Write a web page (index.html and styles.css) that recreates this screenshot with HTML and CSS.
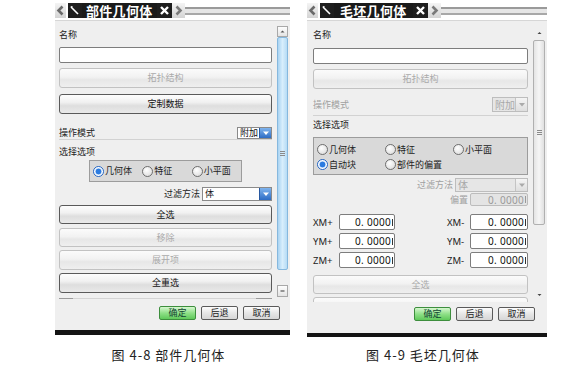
FILE: index.html
```html
<!DOCTYPE html>
<html lang="zh-CN">
<head>
<meta charset="utf-8">
<title>几何体</title>
<link rel="stylesheet" href="styles.css">
</head>
<body>
<div class="page">
  <div class="col">
    <div class="panel panel-left">
      <div class="titlebar">
        <div class="tab-arrow"><svg width="9" height="11" viewBox="0 0 9 11"><polyline points="6.5,1.5 2.5,5.5 6.5,9.5" fill="none" stroke="#6a6a6a" stroke-width="2.6"/></svg></div>
        <div class="tab-pin"><svg width="14" height="15" viewBox="0 0 14 15"><path d="M3 4 L10 11" stroke="#fff" stroke-width="1.6"/><path d="M2.5 3 L5 3.5 L3.5 5 Z" fill="#fff"/></svg></div>
        <div class="tab-title">部件几何体</div>
        <div class="tab-close"><svg width="15" height="15" viewBox="0 0 15 15"><path d="M4 4 L11 11 M11 4 L4 11" stroke="#fff" stroke-width="2.4"/></svg></div>
        <div class="tab-arrow tab-arrow-r"><svg width="9" height="11" viewBox="0 0 9 11"><polyline points="2.5,1.5 6.5,5.5 2.5,9.5" fill="none" stroke="#7a7a7a" stroke-width="2.6"/></svg></div>
        <div class="tab-bar"></div>
      </div>
      <div class="body body-left">
        <div class="content content-left">
          <div class="lbl l-name">名称</div>
          <div class="field l-input"></div>
          <div class="btn dis l-topo">拓扑结构</div>
          <div class="btn l-custom">定制数据</div>
          <div class="row l-mode">
            <span class="lbl">操作模式</span>
            <div class="dd dd-mode"><span class="dd-text">附加</span><span class="dd-btn"><svg width="10" height="10" viewBox="0 0 10 10"><path d="M2 3.5 L5 7 L8 3.5 Z" fill="#fff"/></svg></span></div>
          </div>
          <div class="sep"></div>
          <div class="lbl l-sel">选择选项</div>
          <div class="radiobox l-radios">
            <div class="ritem"><span class="radio on"></span><span class="rtext">几何体</span></div>
            <div class="ritem"><span class="radio"></span><span class="rtext">特征</span></div>
            <div class="ritem"><span class="radio"></span><span class="rtext">小平面</span></div>
          </div>
          <div class="row-end l-filter">
            <span class="lbl">过滤方法</span>
            <div class="dd dd-filter"><span class="dd-text">体</span><span class="dd-btn"><svg width="10" height="12" viewBox="0 0 10 12"><path d="M2 4.5 L5 8 L8 4.5 Z" fill="#fff"/></svg></span></div>
          </div>
          <div class="btn b19 l-all">全选</div>
          <div class="btn dis b19 l-rm">移除</div>
          <div class="btn dis l-exp">展开项</div>
          <div class="btn l-resel">全重选</div>
          <div class="sash"></div>
        </div>
        <div class="scroll scroll-left">
          <div class="sb-up-box"><svg width="9" height="9" viewBox="0 0 9 9"><path d="M2.5 5.5 L4.5 3.5 L6.5 5.5 Z" fill="#555"/></svg></div>
          <div class="thumb thumb-blue"><span class="grip"></span></div>
          <div class="sb-space"></div>
          <div class="sb-down-box"><svg width="9" height="9" viewBox="0 0 9 9"><path d="M2.5 4 L6.5 4" stroke="#555" stroke-width="1.2"/></svg></div>
        </div>
      </div>
      <div class="footer footer-left">
        <div class="fbtn ok">确定</div>
        <div class="fbtn">后退</div>
        <div class="fbtn">取消</div>
      </div>
      <div class="bar-bottom"></div>
    </div>
    <div class="caption caption-left">图 4-8 部件几何体</div>
  </div>

  <div class="col">
    <div class="panel panel-right">
      <div class="titlebar">
        <div class="tab-arrow"><svg width="9" height="11" viewBox="0 0 9 11"><polyline points="6.5,1.5 2.5,5.5 6.5,9.5" fill="none" stroke="#6a6a6a" stroke-width="2.6"/></svg></div>
        <div class="tab-pin"><svg width="14" height="15" viewBox="0 0 14 15"><path d="M3 4 L10 11" stroke="#fff" stroke-width="1.6"/><path d="M2.5 3 L5 3.5 L3.5 5 Z" fill="#fff"/></svg></div>
        <div class="tab-title tab-title-r">毛坯几何体</div>
        <div class="tab-close"><svg width="15" height="15" viewBox="0 0 15 15"><path d="M4 4 L11 11 M11 4 L4 11" stroke="#fff" stroke-width="2.4"/></svg></div>
        <div class="tab-arrow tab-arrow-r"><svg width="9" height="11" viewBox="0 0 9 11"><polyline points="2.5,1.5 6.5,5.5 2.5,9.5" fill="none" stroke="#7a7a7a" stroke-width="2.6"/></svg></div>
        <div class="tab-bar"></div>
      </div>
      <div class="body body-right">
        <div class="content content-right">
          <div class="lbl r-name">名称</div>
          <div class="field r-input"></div>
          <div class="btn dis r-topo">拓扑结构</div>
          <div class="row r-mode">
            <span class="lbl dim">操作模式</span>
            <div class="dd dd-dis dd-mode-r"><span class="dd-text">附加</span><span class="dd-btn dd-btn-dis"><svg width="10" height="13" viewBox="0 0 10 13"><path d="M2 5 L5 8.5 L8 5 Z" fill="#aaa"/></svg></span></div>
          </div>
          <div class="sep r-sep"></div>
          <div class="lbl r-sel">选择选项</div>
          <div class="radiobox r-radios">
            <div class="rrow">
              <div class="ritem ritem-r"><span class="radio"></span><span class="rtext">几何体</span></div>
              <div class="ritem ritem-r"><span class="radio"></span><span class="rtext">特征</span></div>
              <div class="ritem"><span class="radio"></span><span class="rtext">小平面</span></div>
            </div>
            <div class="rrow">
              <div class="ritem ritem-r"><span class="radio on"></span><span class="rtext">自动块</span></div>
              <div class="ritem"><span class="radio"></span><span class="rtext">部件的偏置</span></div>
            </div>
          </div>
          <div class="row-end r-filter">
            <span class="lbl dim">过滤方法</span>
            <div class="dd dd-dis dd-filter-r"><span class="dd-text">体</span><span class="dd-btn dd-btn-dis"><svg width="10" height="12" viewBox="0 0 10 12"><path d="M2 4.5 L5 8 L8 4.5 Z" fill="#aaa"/></svg></span></div>
          </div>
          <div class="row-end r-offset">
            <span class="lbl dim">偏置</span>
            <div class="num num-dis"><span class="val">0. 0000</span><span class="cut"></span></div>
          </div>
          <div class="xrow r-x1">
            <div class="xpair"><span class="xl">XM+</span><div class="num num-a"><span class="val">0. 0000</span><span class="cut"></span></div></div>
            <div class="xpair"><span class="xl">XM-</span><div class="num num-b"><span class="val">0. 0000</span><span class="cut"></span></div></div>
          </div>
          <div class="xrow r-x2">
            <div class="xpair"><span class="xl">YM+</span><div class="num num-a"><span class="val">0. 0000</span><span class="cut"></span></div></div>
            <div class="xpair"><span class="xl">YM-</span><div class="num num-b"><span class="val">0. 0000</span><span class="cut"></span></div></div>
          </div>
          <div class="xrow r-x3">
            <div class="xpair"><span class="xl">ZM+</span><div class="num num-a"><span class="val">0. 0000</span><span class="cut"></span></div></div>
            <div class="xpair"><span class="xl">ZM-</span><div class="num num-b"><span class="val">0. 0000</span><span class="cut"></span></div></div>
          </div>
          <div class="btn dis b19 r-all">全选</div>
          <div class="btn dis r-next"></div>
        </div>
        <div class="scroll scroll-right">
          <div class="sb-up"><svg width="9" height="10" viewBox="0 0 9 10"><path d="M2.5 6 L4.5 4 L6.5 6 Z" fill="#444"/></svg></div>
          <div class="thumb thumb-gray"><span class="grip"></span></div>
          <div class="sb-space"></div>
          <div class="sb-down"><svg width="9" height="10" viewBox="0 0 9 10"><path d="M2.5 4 L4.5 6 L6.5 4 Z" fill="#444"/></svg></div>
        </div>
      </div>
      <div class="footer footer-right">
        <div class="fbtn ok">确定</div>
        <div class="fbtn">后退</div>
        <div class="fbtn">取消</div>
      </div>
      <div class="bar-bottom bar-bottom-r"></div>
    </div>
    <div class="caption caption-right">图 4-9 毛坯几何体</div>
  </div>
</div>
</body>
</html>
```

FILE: styles.css
```css
body {
  margin: 0;
  background: #fff;
  font-family: "Noto Sans CJK SC", "Noto Sans", sans-serif;
  color: #222;
}
.page {
  display: flex;
  padding-left: 55px;
  gap: 17px;
}
.col {
  display: flex;
  flex-direction: column;
}
.panel {
  background: #efefef;
  display: flex;
  flex-direction: column;
}
.panel-left { width: 235px; }
.panel-right { width: 240px; }

/* title bar */
.titlebar {
  height: 21px;
  box-sizing: border-box;
  padding-top: 3px;
  background: #fff;
  border-bottom: 1px solid #d6d6d6;
  display: flex;
  align-items: flex-start;
}
.tab-arrow {
  width: 11px;
  height: 15px;
  display: flex;
  align-items: center;
  justify-content: center;
  background: linear-gradient(#f4f4f4, #d4d4d4);
}
.tab-arrow svg { display: block; }
.tab-arrow-r { width: 13px; }
.tab-pin {
  width: 14px;
  height: 15px;
  margin-left: 2px;
  background: #1e1e1e;
}
.tab-pin svg, .tab-close svg { display: block; }
.tab-title {
  height: 15px;
  padding: 0 4px;
  background: #1a1a1a;
  color: #fff;
  font-weight: bold;
  font-size: 13px;
  line-height: 15px;
  letter-spacing: 0.3px;
}
.tab-title-r { padding: 0 6px; }
.tab-close {
  width: 15px;
  height: 15px;
  background: #1e1e1e;
}
.tab-bar {
  flex: 1;
  height: 8px;
  margin-top: 4px;
  box-sizing: border-box;
  border-top: 2px solid #9a9a9a;
  border-bottom: 2px solid #a8a8a8;
  background: #e6e6e6;
}

/* body */
.body {
  display: flex;
  overflow: hidden;
}
.body-left { height: 279px; }
.body-right { height: 281px; }
.content {
  flex: 1;
  min-width: 0;
  display: flex;
  flex-direction: column;
}
.content-left { padding: 0 5px 0 4px; }
.content-right { padding: 0 5px 0 6px; }

.lbl {
  font-size: 9px;
  line-height: 12px;
  height: 12px;
  color: #222;
  white-space: nowrap;
}
.dim { color: #a0a0a0; }

.field {
  height: 16px;
  box-sizing: border-box;
  border: 1px solid #7d7d7d;
  border-radius: 2px;
  background: #fff;
  flex-shrink: 0;
}
.btn {
  height: 20px;
  flex-shrink: 0;
  box-sizing: border-box;
  border: 1px solid #5a5a5a;
  border-radius: 3px;
  background: linear-gradient(#fdfdfd, #f1f1f1 40%, #dedede 60%, #e9e9e9);
  font-size: 9px;
  line-height: 18px;
  text-align: center;
  color: #111;
}
.btn.dis {
  border-color: #c2c2c2;
  color: #aaa;
  background: linear-gradient(#fbfbfb, #f2f2f2 45%, #e7e7e7 60%, #efefef);
}
.b19 { height: 19px; line-height: 17px; }

.row {
  display: flex;
  justify-content: space-between;
  align-items: center;
  flex-shrink: 0;
}
.row-end {
  display: flex;
  justify-content: flex-end;
  align-items: center;
  gap: 2px;
  flex-shrink: 0;
}
.sep {
  height: 1px;
  background: #d2d2d2;
  flex-shrink: 0;
}

.dd {
  display: flex;
  box-sizing: border-box;
  border: 1px solid #8a8a8a;
  background: #fff;
}
.dd-text {
  flex: 1;
  font-size: 9px;
  padding-left: 2px;
  color: #111;
  white-space: nowrap;
}
.dd-btn {
  width: 11px;
  display: flex;
  align-items: center;
  justify-content: center;
  background: linear-gradient(#7fb4ee, #2d6cc4);
  border-left: 1px solid #2858a0;
}
.dd-btn svg { display: block; }
.dd-dis { border-color: #bdbdbd; background: #e6e6e6; }
.dd-dis .dd-text { color: #a8a8a8; }
.dd-btn-dis { background: linear-gradient(#f4f4f4, #dedede); border-left: 1px solid #c4c4c4; }

.dd-mode { width: 35px; height: 12px; }
.dd-mode .dd-text { line-height: 10px; }
.dd-filter { width: 70px; height: 14px; }
.dd-filter .dd-text { line-height: 12px; }
.dd-mode-r { width: 36px; height: 15px; }
.dd-mode-r .dd-text { line-height: 13px; font-size: 10px; }
.dd-filter-r { width: 73px; height: 14px; }
.dd-filter-r .dd-text { line-height: 12px; font-size: 10px; }

/* radios */
.radiobox {
  background: #d9d9d9;
  border: 1px solid #9c9c9c;
  box-sizing: border-box;
  flex-shrink: 0;
}
.ritem {
  display: flex;
  align-items: center;
  gap: 1px;
}
.radio {
  width: 9px;
  height: 9px;
  border-radius: 50%;
  border: 1px solid #6e6e6e;
  background: radial-gradient(circle at 40% 35%, #ffffff, #e2e2e2 70%, #cfcfcf);
  flex-shrink: 0;
}
.radio.on {
  border-color: #2566c4;
  background: radial-gradient(circle, #2b7be0 0 2.6px, #cfe3fb 3.2px, #ffffff 4px);
}
.rtext {
  font-size: 9px;
  line-height: 12px;
  color: #222;
  white-space: nowrap;
}

/* left panel spacing */
.l-name { margin-top: 8px; }
.l-input { margin-top: 6px; }
.l-topo { margin-top: 5px; }
.l-custom { margin-top: 6px; }
.l-mode { margin-top: 13px; height: 12px; }
.l-sel { margin-top: 6px; }
.l-radios {
  margin: 2px auto 0;
  width: 153px;
  height: 22px;
  display: flex;
  align-items: center;
  padding-left: 3px;
}
.l-radios .ritem { width: 50px; }
.l-filter { margin-top: 5px; height: 14px; }
.l-all { margin-top: 4px; }
.l-rm { margin-top: 4px; }
.l-exp { margin-top: 3px; }
.l-resel { margin-top: 3px; }
.sash {
  margin-top: 5px;
  height: 1px;
  flex-shrink: 0;
  background: linear-gradient(90deg, #9a9a9a 0 14px, #d4d4d4 14px calc(100% - 16px), #9a9a9a calc(100% - 16px));
}

/* right panel spacing */
.r-name { margin-top: 8px; }
.r-input { margin-top: 7px; }
.r-topo { margin-top: 5px; }
.r-mode { margin-top: 8px; height: 15px; }
.r-sep { margin-top: 3px; }
.r-sel { margin-top: 3px; }
.r-radios {
  margin-top: 6px;
  height: 38px;
  padding: 4px 0 0 3px;
}
.rrow {
  display: flex;
  height: 15px;
  align-items: center;
}
.ritem-r { width: 68px; }
.r-filter { margin-top: 3px; height: 14px; }
.r-offset { margin-top: 1px; height: 13px; }

.num {
  height: 16px;
  box-sizing: border-box;
  border: 1px solid #7d7d7d;
  border-radius: 2px;
  background: #fff;
  display: flex;
  justify-content: flex-end;
  align-items: center;
  padding-right: 1px;
  font-family: "Noto Sans", "DejaVu Sans", sans-serif;
  font-size: 10px;
  color: #111;
  white-space: nowrap;
}
.val { letter-spacing: 0.3px; }
.cut {
  width: 1px;
  height: 7px;
  margin-left: 1px;
  background: #333;
}
.num-dis {
  width: 58px;
  height: 13px;
  background: #e4e4e4;
  border-color: #bcbcbc;
  color: #9a9a9a;
}
.num-dis .cut { background: #999; }
.num-a { width: 56px; }
.num-b { width: 58px; }
.xrow {
  display: flex;
  justify-content: space-between;
  height: 16px;
  flex-shrink: 0;
}
.xpair {
  display: flex;
  align-items: center;
}
.xl {
  font-family: "Noto Sans", "DejaVu Sans", sans-serif;
  font-size: 9.5px;
  color: #222;
  width: 26px;
}
.xpair + .xpair .xl { width: 23px; }
.r-x1 { margin-top: 8px; }
.r-x2 { margin-top: 3px; }
.r-x3 { margin-top: 3px; }
.r-all { margin-top: 7px; }
.r-next { margin-top: 3px; }

/* scrollbars */
.scroll {
  display: flex;
  flex-direction: column;
  flex-shrink: 0;
}
.scroll-left { width: 11px; margin: 5px 2px 3px 0; }
.scroll-right { width: 12px; margin: 7px 2px 2px 0; }
.sb-up-box, .sb-down-box {
  height: 11px;
  box-sizing: border-box;
  border: 1px solid #a8a8a8;
  background: linear-gradient(#fdfdfd, #e4e4e4);
  display: flex;
  align-items: center;
  justify-content: center;
}
.sb-down-box { height: 12px; }
.sb-up, .sb-down {
  height: 10px;
  display: flex;
  align-items: center;
  justify-content: center;
}
.sb-space { flex: 1; }
.thumb {
  box-sizing: border-box;
  display: flex;
  align-items: center;
  justify-content: center;
}
.thumb-blue {
  height: 233px;
  border: 1px solid #86b8de;
  border-radius: 2px;
  background: linear-gradient(90deg, #a9d3f2, #d8eefc 50%, #b6dbf5);
}
.thumb-gray {
  margin-top: 2px;
  height: 185px;
  border: 1px solid #b0b0b0;
  border-radius: 2px;
  background: linear-gradient(90deg, #e4e4e4, #f6f6f6 50%, #e0e0e0);
}
.grip {
  width: 5px;
  height: 5px;
  background: repeating-linear-gradient(#8a8a8a 0 1px, transparent 1px 2px);
}

/* footer */
.footer {
  display: flex;
  justify-content: flex-end;
  align-items: flex-start;
  gap: 5px;
  box-sizing: border-box;
}
.footer-left { height: 30px; padding: 6px 10px 0 0; }
.footer-right { height: 31px; padding: 5px 12px 0 0; }
.fbtn {
  width: 37px;
  height: 14px;
  box-sizing: border-box;
  border: 1px solid #5a5a5a;
  border-radius: 2px;
  background: linear-gradient(#fdfdfd, #e6e6e6 50%, #d6d6d6);
  font-size: 9px;
  line-height: 12px;
  text-align: center;
  color: #222;
}
.fbtn.ok {
  border-color: #3d8e3d;
  background: linear-gradient(#d6f7cf, #8fe088 50%, #5fc95a);
  color: #143;
}
.bar-bottom { height: 5px; background: #141414; }
.bar-bottom-r { height: 4px; }

/* captions */
.caption {
  font-size: 13px;
  line-height: 18px;
  color: #222;
  text-align: center;
  letter-spacing: 1px;
  white-space: nowrap;
  padding-right: 8px;
}
.caption-left { margin-top: 11px; }
.caption-right { margin-top: 9px; }
```
